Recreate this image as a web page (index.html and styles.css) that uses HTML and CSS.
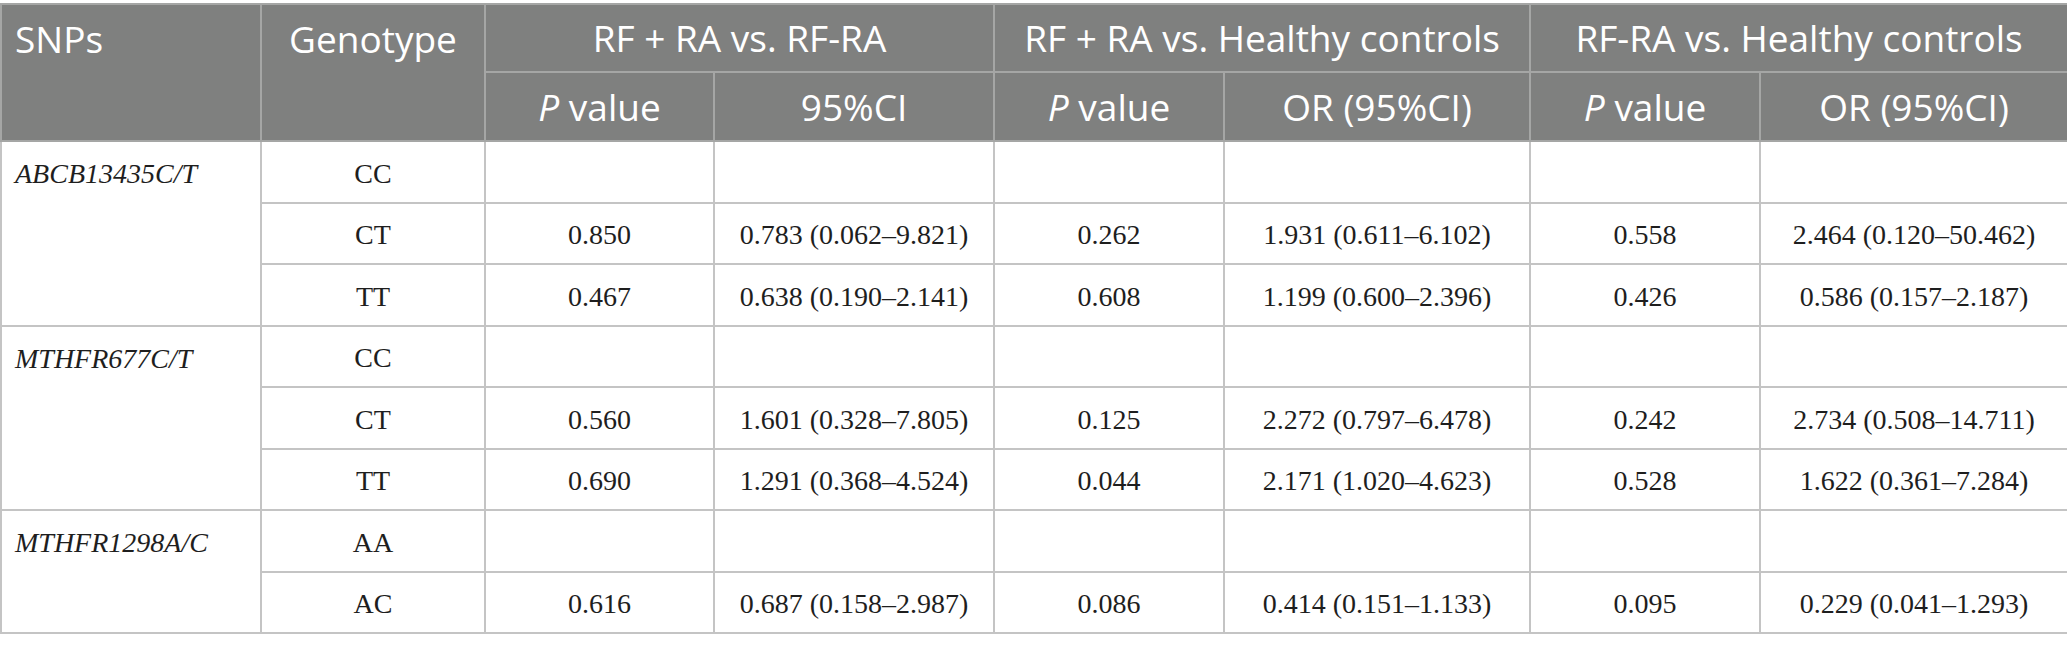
FILE: index.html
```html
<!DOCTYPE html>
<html lang="en">
<head>
<meta charset="utf-8">
<title>SNP genotype comparison</title>
<link rel="stylesheet" href="styles.css">
</head>
<body>
<table class="snp-table">
  <colgroup>
    <col class="c-snp">
    <col class="c-geno">
    <col class="c-p1">
    <col class="c-ci1">
    <col class="c-p2">
    <col class="c-or2">
    <col class="c-p3">
    <col class="c-or3">
  </colgroup>
  <thead>
    <tr class="head-top">
      <th rowspan="2" class="left top-cell">SNPs</th>
      <th rowspan="2" class="top-cell">Genotype</th>
      <th colspan="2">RF + RA vs. RF-RA</th>
      <th colspan="2">RF + RA vs. Healthy controls</th>
      <th colspan="2">RF-RA vs. Healthy controls</th>
    </tr>
    <tr class="head-sub">
      <th><i>P</i> value</th>
      <th>95%CI</th>
      <th><i>P</i> value</th>
      <th>OR (95%CI)</th>
      <th><i>P</i> value</th>
      <th>OR (95%CI)</th>
    </tr>
  </thead>
  <tbody>
    <tr>
      <td rowspan="3" class="snp">ABCB13435C/T</td>
      <td>CC</td><td></td><td></td><td></td><td></td><td></td><td></td>
    </tr>
    <tr>
      <td>CT</td><td>0.850</td><td>0.783 (0.062–9.821)</td><td>0.262</td><td>1.931 (0.611–6.102)</td><td>0.558</td><td>2.464 (0.120–50.462)</td>
    </tr>
    <tr>
      <td>TT</td><td>0.467</td><td>0.638 (0.190–2.141)</td><td>0.608</td><td>1.199 (0.600–2.396)</td><td>0.426</td><td>0.586 (0.157–2.187)</td>
    </tr>
    <tr>
      <td rowspan="3" class="snp">MTHFR677C/T</td>
      <td>CC</td><td></td><td></td><td></td><td></td><td></td><td></td>
    </tr>
    <tr>
      <td>CT</td><td>0.560</td><td>1.601 (0.328–7.805)</td><td>0.125</td><td>2.272 (0.797–6.478)</td><td>0.242</td><td>2.734 (0.508–14.711)</td>
    </tr>
    <tr>
      <td>TT</td><td>0.690</td><td>1.291 (0.368–4.524)</td><td>0.044</td><td>2.171 (1.020–4.623)</td><td>0.528</td><td>1.622 (0.361–7.284)</td>
    </tr>
    <tr>
      <td rowspan="2" class="snp">MTHFR1298A/C</td>
      <td>AA</td><td></td><td></td><td></td><td></td><td></td><td></td>
    </tr>
    <tr>
      <td>AC</td><td>0.616</td><td>0.687 (0.158–2.987)</td><td>0.086</td><td>0.414 (0.151–1.133)</td><td>0.095</td><td>0.229 (0.041–1.293)</td>
    </tr>
  </tbody>
</table>
</body>
</html>
```

FILE: styles.css
```css
html, body {
  margin: 0;
  padding: 0;
  background: #ffffff;
}

body {
  padding-top: 3px;
}

.snp-table {
  border-collapse: collapse;
  table-layout: fixed;
  width: 2067px;
}

.c-snp { width: 260px; }
.c-geno { width: 224px; }
.c-p1 { width: 229px; }
.c-ci1 { width: 280px; }
.c-p2 { width: 230px; }
.c-or2 { width: 306px; }
.c-p3 { width: 230px; }
.c-or3 { width: 308px; }

.snp-table th {
  background: #7f807f;
  color: #ffffff;
  font-family: "Open Sans", "Noto Sans", sans-serif;
  font-weight: 400;
  font-size: 37px;
  line-height: 50px;
  text-align: center;
  vertical-align: middle;
  padding: 0 8px;
  border: 2px solid #a5a6a5;
  white-space: nowrap;
}

.snp-table th i {
  font-style: italic;
}

.snp-table th.top-cell {
  vertical-align: top;
  padding-top: 9px;
}

.snp-table th.left {
  text-align: left;
  padding-left: 13px;
}

.head-top {
  height: 68px;
}

.head-sub {
  height: 69px;
}

.snp-table tbody tr {
  height: 61.5px;
}

.snp-table td {
  font-family: "Liberation Serif", "Times New Roman", serif;
  font-size: 28px;
  line-height: 32px;
  color: #1e1e1e;
  text-align: center;
  vertical-align: middle;
  padding: 4px 8px 0;
  border: 2px solid #c4c4c4;
  white-space: nowrap;
}

.snp-table td.snp {
  font-style: italic;
  text-align: left;
  vertical-align: top;
  padding: 16px 8px 0 13px;
}
```
